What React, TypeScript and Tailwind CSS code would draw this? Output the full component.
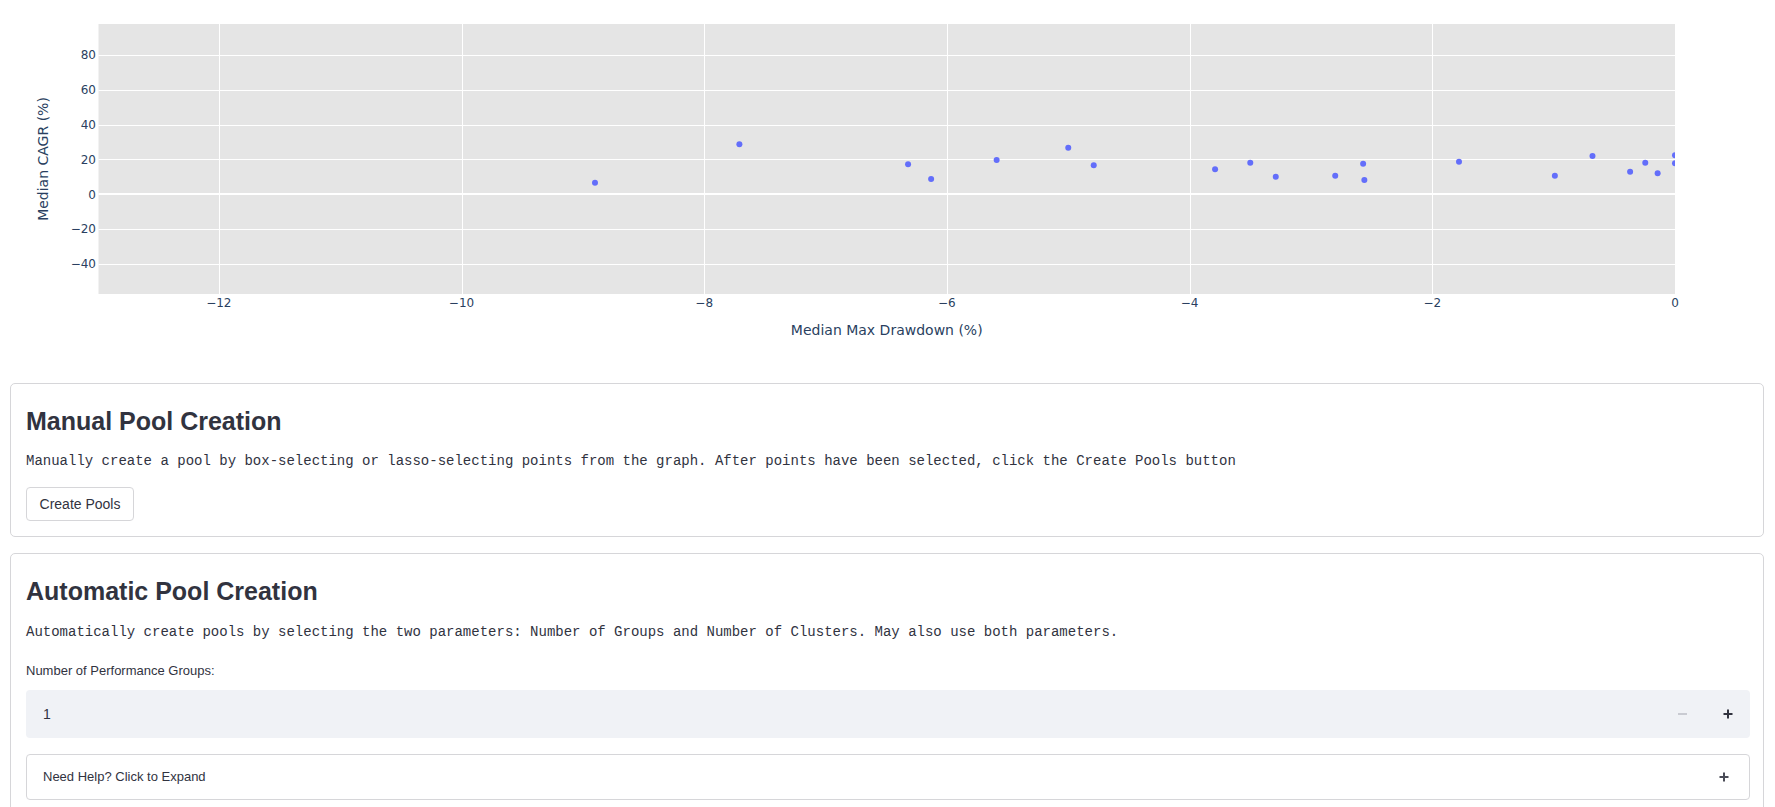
import React from "react";

// scatter data: [median max drawdown %, median CAGR %]
const POINTS: [number, number][] = [
  [-8.9, 6.65],
  [-7.71, 28.7],
  [-6.32, 17.2],
  [-6.13, 8.8],
  [-5.59, 19.7],
  [-5.0, 26.7],
  [-4.79, 16.6],
  [-3.79, 14.3],
  [-3.5, 18.1],
  [-3.29, 10.1],
  [-2.8, 10.7],
  [-2.57, 17.5],
  [-2.56, 8.2],
  [-1.78, 18.7],
  [-0.99, 10.7],
  [-0.68, 22.0],
  [-0.37, 13.0],
  [-0.245, 18.1],
  [-0.143, 12.0],
  [0, 22.4],
  [0, 17.8],
];

const PLOT = { left: 98.5, right: 1675, top: 24, bottom: 294 };
const sx = (v: number) => PLOT.right + v * 121.35;
const sy = (v: number) => 194.3 - v * 1.7442;
const crisp = (n: number) => Math.round(n) + 0.5;
const minus = (n: number) => (n < 0 ? `\u2212${Math.abs(n)}` : `${n}`);

const X_TICKS = [-12, -10, -8, -6, -4, -2, 0];
const Y_TICKS = [80, 60, 40, 20, 0, -20, -40];

function ScatterChart() {
  const w = PLOT.right - PLOT.left;
  const h = PLOT.bottom - PLOT.top;
  return (
    <svg width={1775} height={383} className="block" fontFamily="'DejaVu Sans', Verdana, sans-serif">
      <defs>
        <clipPath id="plot-clip">
          <rect x={PLOT.left} y={PLOT.top} width={w} height={h} />
        </clipPath>
      </defs>
      <rect x={PLOT.left} y={PLOT.top} width={w} height={h} fill="#e5e5e5" />

      {/* grid */}
      {X_TICKS.filter((t) => t !== 0).map((t) => (
        <line key={t} x1={crisp(sx(t))} x2={crisp(sx(t))} y1={PLOT.top} y2={PLOT.bottom} stroke="#fff" strokeWidth={1} />
      ))}
      {Y_TICKS.filter((t) => t !== 0).map((t) => (
        <line key={t} x1={PLOT.left} x2={PLOT.right} y1={crisp(sy(t))} y2={crisp(sy(t))} stroke="#fff" strokeWidth={1} />
      ))}
      <line x1={PLOT.left} x2={PLOT.right} y1={Math.round(sy(0))} y2={Math.round(sy(0))} stroke="#fff" strokeWidth={2} />

      {/* markers */}
      <g clipPath="url(#plot-clip)">
        {POINTS.map(([x, y], i) => (
          <circle key={i} cx={sx(x)} cy={sy(y)} r={3} fill="#636efa" />
        ))}
      </g>

      {/* tick labels */}
      {X_TICKS.map((t) => (
        <text key={t} x={sx(t)} y={307} textAnchor="middle" fontSize={12} fill="#2a3f5f">
          {minus(t)}
        </text>
      ))}
      {Y_TICKS.map((t) => (
        <text key={t} x={96} y={sy(t) + 4.2} textAnchor="end" fontSize={12} fill="#2a3f5f">
          {minus(t)}
        </text>
      ))}

      {/* axis titles */}
      <text x={(PLOT.left + PLOT.right) / 2} y={335} textAnchor="middle" fontSize={14} fill="#2a3f5f">
        Median Max Drawdown (%)
      </text>
      <text
        x={48}
        y={159}
        textAnchor="middle"
        fontSize={14}
        fill="#2a3f5f"
        transform="rotate(-90 48 159)"
      >
        Median CAGR (%)
      </text>
    </svg>
  );
}

function PlusIcon({ className }: { className?: string }) {
  return (
    <svg width="10" height="10" viewBox="0 0 10 10" className={className}>
      <path d="M5 0.5v9M0.5 5h9" stroke="currentColor" strokeWidth="2" />
    </svg>
  );
}

export default function App() {
  return (
    <div className="h-[807px] w-[1775px] overflow-hidden bg-white font-['Liberation_Sans',Arial,sans-serif] text-[#31333f]">
      <ScatterChart />

      <div className="ml-[10px] mr-[11px]">
        {/* Manual pool creation */}
        <section className="rounded-[5px] border border-[#d6d6d9] pt-[22px] pb-[15px] pl-[15px] pr-[13px]">
          <h2 className="text-[25px] leading-[30px] font-bold">Manual Pool Creation</h2>
          <p className="mt-[15px] font-['Liberation_Mono',monospace] text-[14px] leading-[20px]">
            Manually create a pool by box-selecting or lasso-selecting points from the graph. After points have been
            selected, click the Create Pools button
          </p>
          <button className="mt-[16px] flex h-[34px] w-[108px] items-center justify-center rounded-[4px] border border-[#d6d6d9] bg-white text-[14px]">
            Create Pools
          </button>
        </section>

        {/* Automatic pool creation */}
        <section className="mt-[16px] rounded-[5px] border border-[#d6d6d9] pt-[22px] pb-[16px] pl-[15px] pr-[13px]">
          <h2 className="text-[25px] leading-[30px] font-bold">Automatic Pool Creation</h2>
          <p className="mt-[16px] font-['Liberation_Mono',monospace] text-[14px] leading-[20px]">
            Automatically create pools by selecting the two parameters: Number of Groups and Number of Clusters. May
            also use both parameters.
          </p>
          <label className="mt-[21px] block text-[13px] leading-[16px]">Number of Performance Groups:</label>
          <div className="mt-[11px] flex h-[48px] items-center rounded-[4px] bg-[#f0f2f6]">
            <span className="flex-1 pl-[17px] text-[14px]">1</span>
            <div className="flex h-full w-[45px] items-center justify-center text-[#c9cbd2]">
              <svg width="9" height="2" viewBox="0 0 9 2">
                <path d="M0 1h9" stroke="currentColor" strokeWidth="2" />
              </svg>
            </div>
            <div className="flex h-full w-[45px] items-center justify-center text-[#31333f]">
              <PlusIcon />
            </div>
          </div>
          <div className="mt-[16px] flex h-[46px] items-center justify-between rounded-[4px] border border-[#d6d6d9] pl-[16px] pr-[20px]">
            <span className="text-[13px]">Need Help? Click to Expand</span>
            <PlusIcon className="text-[#4a4c57]" />
          </div>
        </section>
      </div>
    </div>
  );
}
